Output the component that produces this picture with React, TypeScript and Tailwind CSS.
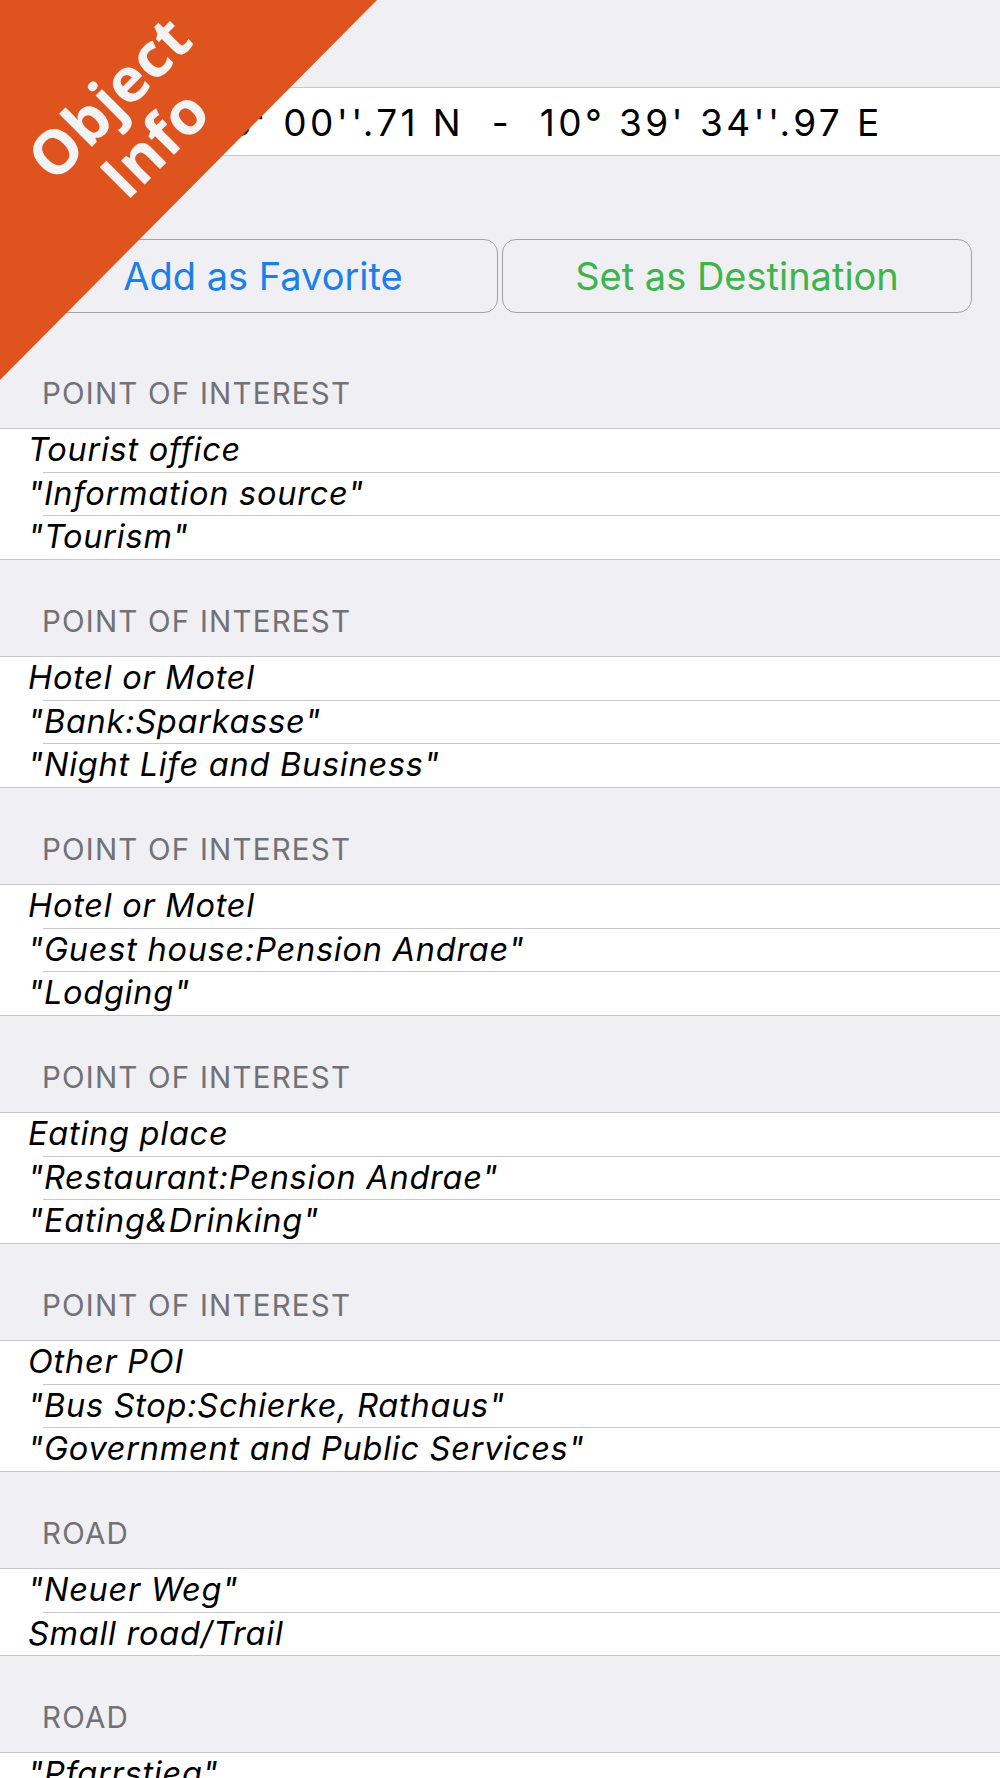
import React from "react";

type Section = { title: string; rows: string[] };

const sections: Section[] = [
  { title: "POINT OF INTEREST", rows: ["Tourist office", "\"Information source\"", "\"Tourism\""] },
  { title: "POINT OF INTEREST", rows: ["Hotel or Motel", "\"Bank:Sparkasse\"", "\"Night Life and Business\""] },
  { title: "POINT OF INTEREST", rows: ["Hotel or Motel", "\"Guest house:Pension Andrae\"", "\"Lodging\""] },
  { title: "POINT OF INTEREST", rows: ["Eating place", "\"Restaurant:Pension Andrae\"", "\"Eating&Drinking\""] },
  { title: "POINT OF INTEREST", rows: ["Other POI", "\"Bus Stop:Schierke, Rathaus\"", "\"Government and Public Services\""] },
  { title: "ROAD", rows: ["\"Neuer Weg\"", "Small road/Trail"] },
  { title: "ROAD", rows: ["\"Pfarrstieg\"", "Small road/Trail"] },
];

function Header({ title, first }: { title: string; first?: boolean }) {
  return (
    <div
      className={`${first ? "h-[115px]" : "h-[96px]"} flex items-end pl-[42px] pb-[20px] text-[29.5px] leading-[30px] tracking-[1.2px] text-[#717176]`}
    >
      {title}
    </div>
  );
}

function SectionBlock({ s, first }: { s: Section; first?: boolean }) {
  return (
    <div>
      <Header title={s.title} first={first} />
      <div className="border-y border-[#c8c7cc] bg-white">
        {s.rows.map((r, i) => (
          <div key={i}>
            {i > 0 && <div className="ml-[43px] h-px bg-[#c8c7cc]" />}
            <div className="h-[42.67px] pl-[28px] text-[32.5px] leading-[42.67px] italic text-black tracking-[0.75px] whitespace-pre">
              {r}
            </div>
          </div>
        ))}
      </div>
    </div>
  );
}

export default function App() {
  return (
    <div
      className="relative w-[1000px] h-[1778px] overflow-hidden bg-[#efeff4]"
      style={{ fontFamily: "Inter, 'Liberation Sans', Arial, sans-serif" }}
    >
      <div className="h-[87px]" />
      <div className="h-[69px] border-y border-[#c8c7cc] bg-white flex items-center justify-center">
        <div className="text-[37px] leading-[67px] pt-[2px] pl-[6px] text-black tracking-[3.4px] whitespace-pre">
          {"51° 45' 00''.71 N  -  10° 39' 34''.97 E"}
        </div>
      </div>
      <div className="h-[83px]" />
      <div className="flex gap-[4px] px-[28px]">
        <div className="flex-1 h-[74px] rounded-[14px] border-[1.5px] border-[#a2a2a7] flex items-center justify-center text-[38px] text-[#1a7fe6]">
          Add as Favorite
        </div>
        <div className="flex-1 h-[74px] rounded-[14px] border-[1.5px] border-[#a2a2a7] flex items-center justify-center text-[38px] text-[#3db54a]">
          Set as Destination
        </div>
      </div>
      {sections.map((s, i) => (
        <SectionBlock key={i} s={s} first={i === 0} />
      ))}

      {/* Corner banner */}
      <div className="absolute left-0 top-0 w-[377px] h-[380px] bg-[#df541e] [clip-path:polygon(0_0,100%_0,0_100%)]" />
      <div
        className="absolute left-[131px] top-[120px] -translate-x-1/2 -translate-y-1/2 -rotate-45 text-center text-[61px] leading-[64px] font-bold text-[#f3f3f5] whitespace-nowrap"
        style={{ fontFamily: "'Open Sans', 'Liberation Sans', sans-serif" }}
      >
        <div>Object</div>
        <div>Info</div>
      </div>
    </div>
  );
}
